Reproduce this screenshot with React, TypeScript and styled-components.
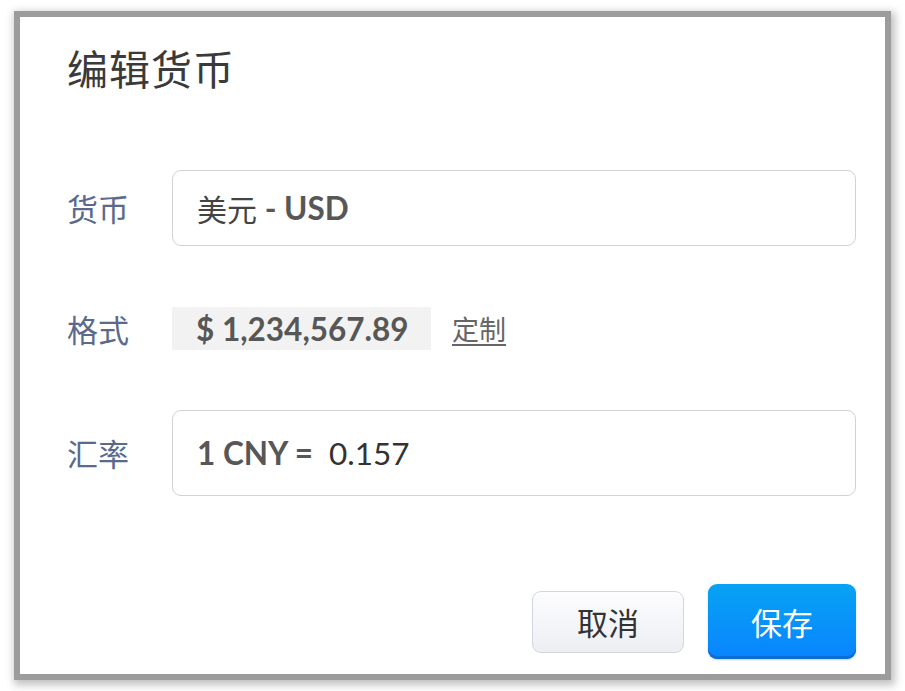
import styled, { createGlobalStyle } from "styled-components";

const GlobalStyle = createGlobalStyle`
  html, body {
    margin: 0;
    padding: 0;
    background: #ffffff;
  }
  body {
    font-family: Lato, "Noto Sans CJK SC", sans-serif;
  }
`;

const Stage = styled.div`
  width: 905px;
  height: 691px;
  padding: 17px 20px 0 20px;
  box-sizing: border-box;
`;

const Dialog = styled.div`
  width: 865px;
  height: 657px;
  background: #ffffff;
  box-sizing: border-box;
  padding: 25px 29px 15px 47px;
  display: flex;
  flex-direction: column;
  box-shadow: 0 0 0 6px #9c9c9c, 2px 3px 8px 8px rgba(0, 0, 0, 0.25);
`;

const Title = styled.h1`
  margin: 0;
  font-family: "Noto Sans CJK SC", sans-serif;
  font-weight: 400;
  font-size: 41px;
  line-height: 50px;
  color: #3a3a3a;
  letter-spacing: 1px;
`;

const Form = styled.div`
  display: grid;
  grid-template-columns: 105px 1fr;
  align-items: center;
  margin-top: 78px;
`;

const Label = styled.div<{ $top: number }>`
  margin-top: ${(p) => p.$top}px;
  font-family: "Noto Sans CJK SC", sans-serif;
  font-size: 31px;
  line-height: 40px;
  color: #5b6a8c;
`;

const Field = styled.div<{ $height: number; $top: number }>`
  margin-top: ${(p) => p.$top}px;
  height: ${(p) => p.$height}px;
  border: 1px solid #cfd2d6;
  border-radius: 9px;
  box-sizing: border-box;
  padding: 0 24px;
  display: flex;
  align-items: center;
  font-size: 31.5px;
  color: #444444;
`;

const Cn = styled.span`
  font-family: "Noto Sans CJK SC", sans-serif;
  font-weight: 400;
  font-size: 30px;
`;

const Strong = styled.span`
  font-family: Lato, sans-serif;
  font-weight: 700;
  color: #575757;
`;

const Plain = styled.span`
  font-family: Lato, sans-serif;
  font-weight: 400;
  color: #333333;
  margin-left: 16px;
`;

const FormatRow = styled.div<{ $top: number }>`
  margin-top: ${(p) => p.$top}px;
  display: flex;
  align-items: center;
  gap: 21px;
`;

const Sample = styled.div`
  width: 259px;
  height: 43px;
  background: #f2f2f2;
  box-sizing: border-box;
  padding-left: 24px;
  display: flex;
  align-items: center;
  font-family: Lato, sans-serif;
  font-weight: 700;
  font-size: 31.5px;
  color: #575757;
`;

const CustomLink = styled.a`
  font-family: "Noto Sans CJK SC", sans-serif;
  font-size: 27px;
  color: #666666;
  text-decoration: underline;
  text-underline-offset: 4px;
  text-decoration-thickness: 2px;
`;

const Footer = styled.div`
  margin-top: auto;
  display: flex;
  justify-content: flex-end;
  align-items: center;
  gap: 24px;
`;

const Button = styled.button<{ $primary?: boolean }>`
  font-family: "Noto Sans CJK SC", sans-serif;
  font-size: 31px;
  border-radius: 9px;
  box-sizing: border-box;
  cursor: pointer;
  width: ${(p) => (p.$primary ? 148 : 152)}px;
  height: ${(p) => (p.$primary ? 75 : 62)}px;
  color: ${(p) => (p.$primary ? "#ffffff" : "#333333")};
  border: ${(p) => (p.$primary ? "none" : "1px solid #d3d6de")};
  background: ${(p) =>
    p.$primary
      ? "linear-gradient(#07a3f3, #0a84ff)"
      : "linear-gradient(#fdfdfe, #eceef3)"};
  box-shadow: ${(p) =>
    p.$primary ? "inset 0 -3px 0 #0b6ed6, 0 1px 2px rgba(0,0,0,0.2)" : "none"};
  padding: 0;
`;

export default function App() {
  return (
    <Stage>
      <GlobalStyle />
      <Dialog>
        <Title>编辑货币</Title>
        <Form>
          <Label $top={0}>货币</Label>
          <Field $height={76} $top={0}>
            <Cn>美元</Cn>
            <Strong>&nbsp;- USD</Strong>
          </Field>

          <Label $top={61}>格式</Label>
          <FormatRow $top={61}>
            <Sample>$ 1,234,567.89</Sample>
            <CustomLink>定制</CustomLink>
          </FormatRow>

          <Label $top={60}>汇率</Label>
          <Field $height={86} $top={60}>
            <Strong>1 CNY =</Strong>
            <Plain>0.157</Plain>
          </Field>
        </Form>
        <Footer>
          <Button>取消</Button>
          <Button $primary>保存</Button>
        </Footer>
      </Dialog>
    </Stage>
  );
}
